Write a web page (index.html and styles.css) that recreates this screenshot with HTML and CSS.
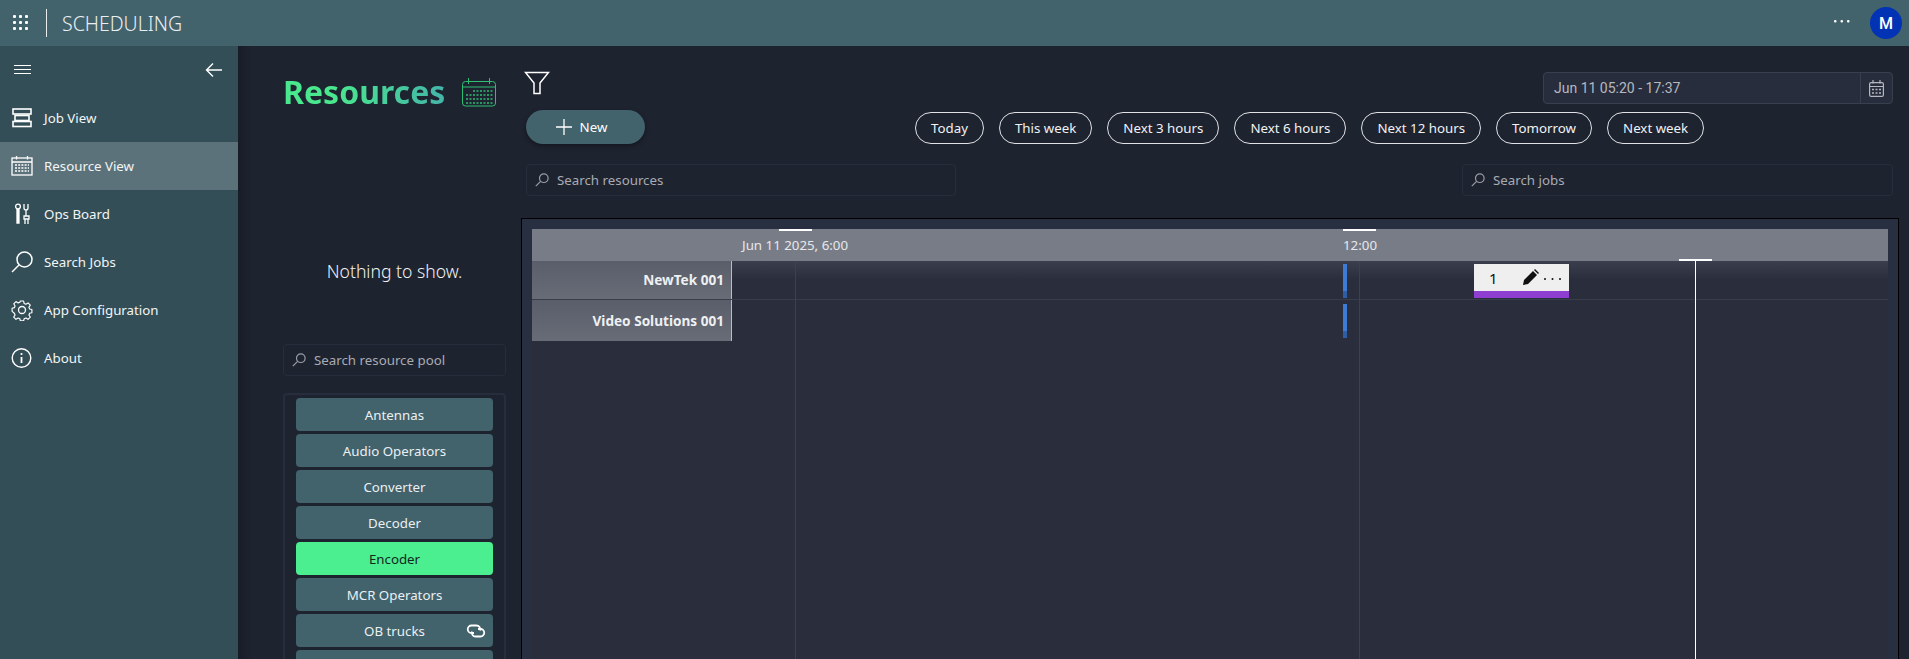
FILE: index.html
```html
<!DOCTYPE html>
<html lang="en">
<head>
    <meta charset="UTF-8">
    <title>Scheduling</title>
    <link rel="stylesheet" href="styles.css">
</head>
<body>

    <header class="topbar">
        <svg class="apps" width="16" height="16" viewBox="0 0 16 16" fill="#fff">
            <rect x="0" y="0" width="3" height="3" rx="1"/><rect x="6" y="0" width="3" height="3" rx="1"/><rect x="12" y="0" width="3" height="3" rx="1"/>
            <rect x="0" y="6" width="3" height="3" rx="1"/><rect x="6" y="6" width="3" height="3" rx="1"/><rect x="12" y="6" width="3" height="3" rx="1"/>
            <rect x="0" y="12" width="3" height="3" rx="1"/><rect x="6" y="12" width="3" height="3" rx="1"/><rect x="12" y="12" width="3" height="3" rx="1"/>
        </svg>
        <div class="divider"></div>
        <div class="appname">SCHEDULING</div>
        <svg class="more" width="16" height="3" viewBox="0 0 16 3" fill="#fff"><rect width="2.500" height="2.500" rx="1"/><rect x="6.500" width="2.500" height="2.500" rx="1"/><rect x="13" width="2.500" height="2.500" rx="1"/></svg>
        <div class="avatar">M</div>
    </header>

    <div class="layout">
        <nav class="sidebar">
            <div class="sidebar-head">
                <svg width="17" height="10" viewBox="0 0 17 10" stroke="#fff" stroke-width="1"><path d="M0 .5h17M0 4.500h17M0 8.500h17"/></svg>
                <svg width="18" height="16" viewBox="0 0 18 16" fill="none" stroke="#fff" stroke-width="1.400"><path d="M17 8H1.500M8 1.500 1.500 8 8 14.500"/></svg>
            </div>
            <a class="nav-item">
                <svg width="22" height="20" viewBox="0 0 22 20" fill="none" stroke="#fff" stroke-width="1.600"><rect x="2" y="1" width="18" height="5"/><rect x="4" y="7.500" width="14" height="5"/><rect x="2" y="13.500" width="18" height="5"/></svg>
                <span>Job View</span>
            </a>
            <a class="nav-item active">
                <svg width="22" height="20" viewBox="0 0 22 20" fill="none" stroke="#fff" stroke-width="1.300"><rect x="1" y="2" width="20" height="17"/><path d="M1 6h20M5.500 0v3.500M16.500 0v3.500"/><path d="M4 9h14M4 12h14M4 15h14" stroke-dasharray="2 1.200"/></svg>
                <span>Resource View</span>
            </a>
            <a class="nav-item">
                <svg width="22" height="22" viewBox="0 0 22 22" fill="none" stroke="#fff" stroke-width="1.300"><circle cx="7" cy="3.500" r="2.400"/><path d="M6 6v14h2V6M7 6v14"/><path d="M13 1v4a2 2 0 0 0 4 0V1M15 7v6M13 13h5v3h-5zM14 16v5M17 16v5"/></svg>
                <span>Ops Board</span>
            </a>
            <a class="nav-item">
                <svg width="22" height="22" viewBox="0 0 22 22" fill="none" stroke="#fff" stroke-width="1.500"><circle cx="13.500" cy="8.500" r="7.500"/><path d="M8 14 1 21"/></svg>
                <span>Search Jobs</span>
            </a>
            <a class="nav-item">
                <svg width="22" height="22" viewBox="0 0 22 22" fill="none" stroke="#fff" stroke-width="1.300"><circle cx="11" cy="11" r="3.500"/><path d="M9.200 1h3.600l.6 2.800 1.900.8 2.400-1.500 2.500 2.500-1.500 2.400.8 1.900 2.500.6v3.500l-2.500.6-.8 1.900 1.500 2.400-2.500 2.500-2.400-1.500-1.900.8-.6 2.300H9.200l-.6-2.300-1.900-.8-2.400 1.500-2.500-2.500 1.500-2.400-.8-1.900L0 12.500V9l2.500-.6.800-1.900-1.500-2.400 2.500-2.500 2.400 1.500 1.900-.8z" transform="translate(1.100 1.100) scale(.9)" stroke-linejoin="round"/></svg>
                <span>App Configuration</span>
            </a>
            <a class="nav-item">
                <svg width="22" height="22" viewBox="0 0 22 22" fill="none" stroke="#fff" stroke-width="1.400"><circle cx="10.500" cy="11" r="9.300"/><path d="M10.500 10v6" stroke-width="1.800"/><circle cx="10.500" cy="7" r="1.100" fill="#fff" stroke="none"/></svg>
                <span>About</span>
            </a>
        </nav>

        <main class="content">
            <aside class="left-panel">
                <div class="title-row">
                    <h1>Resources</h1>
                    <svg width="35" height="29" viewBox="0 0 35 29" fill="none" stroke="#2fbf74" stroke-width="1"><rect x=".5" y="3.500" width="33" height="24.500" rx="3"/><path d="M.5 9h33M6.500 0v6M27.500 0v6"/><path d="M11 13h20M4 17h27M4 21h27M4 25h27" stroke-dasharray="2 1.500" stroke-width="1.500"/></svg>
                </div>
                <div class="nothing">Nothing to show.</div>
                <div class="search pool-search">
                    <svg class="lens" width="14" height="14" viewBox="0 0 14 14" fill="none" stroke="#9a9da5" stroke-width="1.200"><circle cx="8.800" cy="5.200" r="4.300"/><path d="M5.600 8.400.8 13.200"/></svg>
                    <span>Search resource pool</span>
                </div>
                <div class="pool">
                    <div class="pool-item">Antennas</div>
                    <div class="pool-item">Audio Operators</div>
                    <div class="pool-item">Converter</div>
                    <div class="pool-item">Decoder</div>
                    <div class="pool-item selected">Encoder</div>
                    <div class="pool-item">MCR Operators</div>
                    <div class="pool-item">OB trucks
                        <svg class="link" width="20" height="14" viewBox="0 0 20 14" fill="none" stroke="#fff" stroke-width="1.800"><path d="M8 9H5.500a3.750 3.750 0 0 1 0-7.500h5a3.750 3.750 0 0 1 3.500 5"/><path d="M12 5h2.500a3.750 3.750 0 0 1 0 7.500h-5a3.750 3.750 0 0 1-3.500-5"/></svg>
                    </div>
                    <div class="pool-item"></div>
                </div>
            </aside>

            <section class="right-panel">
                <div class="filter-row">
                    <svg width="26" height="24" viewBox="0 0 26 24" fill="none" stroke="#fff" stroke-width="1.500"><path d="M1.500 1.500h23L16 12v10.500h-6V12z"/></svg>
                    <div class="search date-range">
                        <span>Jun 11 05:20 - 17:37</span>
                        <div class="date-btn">
                            <svg width="15" height="17" viewBox="0 0 15 17" fill="none" stroke="#b5b8bf" stroke-width="1.200"><rect x=".6" y="2.600" width="13.800" height="13.800" rx="1.500"/><path d="M.6 6.500h13.800M4 0v3.500M11 0v3.500"/><path d="M3 9.500h9M3 13h9" stroke-dasharray="2 1.500" stroke-width="1.600"/></svg>
                        </div>
                    </div>
                </div>
                <div class="action-row">
                    <button class="new-btn">
                        <svg width="18" height="18" viewBox="0 0 18 18" stroke="#fff" stroke-width="1.300"><path d="M9 1v16M1 9h16"/></svg>
                        New
                    </button>
                    <div class="pills">
                        <div class="pill">Today</div>
                        <div class="pill">This week</div>
                        <div class="pill">Next 3 hours</div>
                        <div class="pill">Next 6 hours</div>
                        <div class="pill">Next 12 hours</div>
                        <div class="pill">Tomorrow</div>
                        <div class="pill">Next week</div>
                    </div>
                </div>
                <div class="search-row">
                    <div class="search res-search">
                        <svg class="lens" width="14" height="14" viewBox="0 0 14 14" fill="none" stroke="#9a9da5" stroke-width="1.200"><circle cx="8.800" cy="5.200" r="4.300"/><path d="M5.600 8.400.8 13.200"/></svg>
                        <span>Search resources</span>
                    </div>
                    <div class="search job-search">
                        <svg class="lens" width="14" height="14" viewBox="0 0 14 14" fill="none" stroke="#9a9da5" stroke-width="1.200"><circle cx="8.800" cy="5.200" r="4.300"/><path d="M5.600 8.400.8 13.200"/></svg>
                        <span>Search jobs</span>
                    </div>
                </div>

                <div class="timeline">
                    <div class="time-head">
                        <div class="label">Jun 11 2025, 6:00</div>
                        <div class="label noon">12:00</div>
                    </div>
                    <div class="rows">
                        <div class="row">
                            <div class="row-name">NewTek 001</div>
                            <div class="row-track"></div>
                        </div>
                        <div class="row">
                            <div class="row-name">Video Solutions 001</div>
                            <div class="row-track"></div>
                        </div>
                    </div>

                    <!-- these sit on the time axis -->
                    <div class="tick tick-six"></div>
                    <div class="tick tick-noon"></div>
                    <div class="grid-line line-six"></div>
                    <div class="grid-line line-noon"></div>
                    <div class="blue-bar bar-one"></div>
                    <div class="blue-bar bar-two"></div>
                    <div class="job">
                        <span class="job-name">1</span>
                        <svg width="17" height="17" viewBox="0 0 17 17" fill="#111"><path d="M1 16l1-5L11 2l4 4-9 9zM12 1l1-1 4 4-1 1z"/></svg>
                        <svg class="job-more" width="17" height="3" viewBox="0 0 17 3" fill="#111"><rect width="2" height="2" rx="1"/><rect x="7.500" width="2" height="2" rx="1"/><rect x="15" width="2" height="2" rx="1"/></svg>
                    </div>
                    <div class="now-cap"></div>
                    <div class="now-line"></div>
                </div>
            </section>
        </main>
    </div>

</body>
</html>
```

FILE: styles.css
```css
*{
    margin: 0;
    padding: 0;
    box-sizing: border-box;
}
body{
    height: 659px;
    overflow: hidden;
    background-color: #1e2330;
    color: #fff;
    font-family: "Noto Sans", "Open Sans", sans-serif;
    font-size: 13.3px;
}
.topbar{
    height: 46px;
    background-color: #42626c;
    display: flex;
    align-items: center;
    padding: 0 7px 0 13px;
}
.divider{
    width: 1px;
    height: 28px;
    background-color: #e8ecee;
    margin-left: 17px;
}
.appname{
    margin-left: 15px;
    font-size: 19.5px;
    font-weight: 300;
    color: #eaeff1;
    flex: 1;
}
.more{
    margin-right: 20px;
    margin-bottom: 3px;
}
.avatar{
    width: 32px;
    height: 32px;
    border-radius: 50%;
    background-color: #0133b4;
    font-family: Roboto, sans-serif;
    font-weight: 500;
    font-size: 16px;
    display: flex;
    align-items: center;
    justify-content: center;
}
.layout{
    display: flex;
    height: 613px;
    overflow: hidden;
}
.sidebar{
    width: 238px;
    flex: none;
    background-color: #334e57;
}
.sidebar-head{
    height: 48px;
    display: flex;
    align-items: center;
    justify-content: space-between;
    padding: 0 15px 0 14px;
}
.nav-item{
    height: 48px;
    display: flex;
    align-items: center;
    gap: 11px;
    padding-left: 11px;
    color: #f2f5f6;
}
.active{
    background-color: #5c727b;
}
.content{
    flex: 1;
    display: flex;
    padding-left: 45px;
    background: linear-gradient(90deg, #181c27 0, #1e2330 14px);
}
.left-panel{
    width: 223px;
    flex: none;
}
.title-row{
    display: flex;
    align-items: center;
    gap: 17px;
    height: 46px;
    margin-top: 23px;
}
h1{
    font-size: 32px;
    font-weight: 700;
    line-height: 46px;
    background: linear-gradient(90deg, #4ae88e 30%, #44b5a9);
    -webkit-background-clip: text;
    background-clip: text;
    color: transparent;
}
.nothing{
    margin-top: 144px;
    text-align: center;
    font-size: 17.6px;
    font-weight: 300;
    color: #f0f2f4;
    line-height: 24px;
}
.search{
    display: flex;
    align-items: center;
    height: 32px;
    border: 1px solid #282d3d;
    border-radius: 4px;
    color: #a9abb2;
    padding-left: 8px;
    gap: 8px;
}
.pool-search{
    margin-top: 61px;
}
.pool{
    margin-top: 17px;
    border: 2px solid #282d3d;
    border-bottom: none;
    border-radius: 4px 4px 0 0;
    padding: 3px 11px 0;
    display: flex;
    flex-direction: column;
    gap: 3px;
    height: 266px;
    overflow: hidden;
}
.pool-item{
    flex: none;
    height: 33px;
    border-radius: 4px;
    background-color: #42626c;
    color: #eaf0f2;
    display: flex;
    align-items: center;
    justify-content: center;
    position: relative;
}
.selected{
    background-color: #4bef8f;
    color: #14261f;
}
.link{
    position: absolute;
    right: 7px;
    top: 10px;
}
.right-panel{
    width: 1378px;
    margin-left: 15px;
    flex: none;
    position: relative;
}
.filter-row{
    display: flex;
    justify-content: space-between;
    align-items: flex-start;
    padding: 25px 6px 0 3px;
    height: 64px;
}
.date-range{
    width: 350px;
    margin-top: 1px;
    background-color: #282d3d;
    border-color: #3a3f4e;
    padding: 0 0 0 10px;
    justify-content: space-between;
    color: #b5b8bf;
    font-family: Roboto, sans-serif;
    font-size: 14px;
}
.date-btn{
    width: 32px;
    height: 30px;
    border-left: 1px solid #3a3f4e;
    display: flex;
    align-items: center;
    justify-content: center;
}
.action-row{
    display: flex;
    align-items: flex-start;
}
.new-btn{
    margin-left: 5px;
    width: 119px;
    height: 34px;
    border: none;
    border-radius: 17px;
    background-color: #42626c;
    color: #fff;
    font: inherit;
    box-shadow: 0 2px 5px rgba(0, 0, 0, .4);
    display: flex;
    align-items: center;
    justify-content: center;
    gap: 7px;
    padding-right: 9px;
}
.pills{
    display: flex;
    gap: 15px;
    margin-left: 270px;
    margin-top: 2px;
}
.pill{
    height: 32px;
    padding: 0 15px;
    border: 1px solid #e0e2e5;
    border-radius: 16px;
    display: flex;
    align-items: center;
    white-space: nowrap;
    color: #f0f2f4;
}
.search-row{
    display: flex;
    justify-content: space-between;
    margin-top: 20px;
    padding: 0 6px 0 5px;
}
.res-search{
    width: 430px;
}
.job-search{
    width: 431px;
}
.timeline{
    margin-top: 22px;
    height: 441px;
    border: 1px solid #000;
    border-bottom: none;
    background-color: #282f41;
    padding: 10px 10px 0 10px;
    position: relative;
    overflow: hidden;
}
.time-head{
    height: 32px;
    background-color: #787c87;
    color: #e6e8ea;
    position: relative;
}
.label{
    position: absolute;
    left: 210px;
    top: 7px;
}
.noon{
    left: 811px;
}
.rows{
    height: 400px;
    background-color: #2a2d3c;
}
.row{
    display: flex;
    height: 39px;
    border-bottom: 1px solid #383d4b;
}
.row + .row{
    height: 41px;
    border-bottom: none;
}
.row-name{
    width: 200px;
    flex: none;
    background: linear-gradient(180deg, #5a5e6a, #686c77);
    border-right: 1px solid #b9bcc3;
    text-align: right;
    padding-right: 7px;
    font-size: 13.6px;
    font-weight: 700;
    line-height: 37px;
    color: #eef0f2;
}
.row + .row .row-name{
    line-height: 41px;
}
.row-track{
    flex: 1;
}
.row:first-child .row-track{
    background: linear-gradient(180deg, #3a3e4d, #2a2d3c 50%);
}
.tick{
    position: absolute;
    top: 10px;
    width: 33px;
    height: 2px;
    background-color: #fff;
}
.tick-six{
    left: 257px;
}
.tick-noon{
    left: 821px;
}
.grid-line{
    position: absolute;
    top: 42px;
    bottom: 0;
    width: 1px;
    background-color: #3c4150;
}
.line-six{
    left: 273px;
}
.line-noon{
    left: 837px;
}
.blue-bar{
    position: absolute;
    left: 821px;
    width: 4px;
    height: 34px;
    background: linear-gradient(180deg, #3d7bd6 80%, #2f5ea6 80%);
}
.bar-one{
    top: 45px;
}
.bar-two{
    top: 85px;
}
.job{
    position: absolute;
    left: 952px;
    top: 45px;
    width: 95px;
    height: 34px;
    background-color: #efefef;
    border-bottom: 7px solid #8e3fd1;
    display: flex;
    align-items: center;
    color: #111;
}
.job-name{
    margin-left: 15px;
    font-size: 15px;
    flex: 1;
}
.job-more{
    margin: 4px 8px 0 5px;
}
.now-cap{
    position: absolute;
    left: 1157px;
    top: 40px;
    width: 33px;
    height: 2px;
    background-color: #fff;
}
.now-line{
    position: absolute;
    left: 1173px;
    top: 42px;
    bottom: 0;
    width: 1px;
    background-color: #fff;
}
```
